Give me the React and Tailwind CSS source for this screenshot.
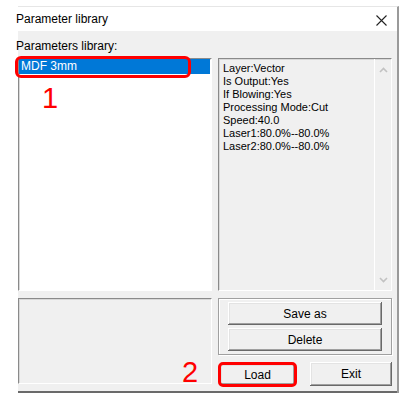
import React from "react";

const params = [
  "Layer:Vector",
  "Is Output:Yes",
  "If Blowing:Yes",
  "Processing Mode:Cut",
  "Speed:40.0",
  "Laser1:80.0%--80.0%",
  "Laser2:80.0%--80.0%",
];

const sunken =
  "border-t border-l border-[#8a8a8a] border-r border-b border-r-white border-b-white shadow-[inset_1px_1px_0_#d8d8d8]";

const btn =
  "flex items-center justify-center bg-[#f0f0f0] text-[12px] text-black shadow-[inset_-1px_-1px_0_#696969,inset_1px_1px_0_#ffffff,inset_-2px_-2px_0_#a0a0a0,inset_2px_2px_0_#e3e3e3]";

const ChevronUp = () => (
  <svg width="9" height="6" viewBox="0 0 9 6">
    <path d="M1 5 L4.5 1.5 L8 5" fill="none" stroke="#c2c2c2" strokeWidth="1.6" />
  </svg>
);

const ChevronDown = () => (
  <svg width="9" height="6" viewBox="0 0 9 6">
    <path d="M1 1 L4.5 4.5 L8 1" fill="none" stroke="#c2c2c2" strokeWidth="1.6" />
  </svg>
);

const App = () => {
  return (
    <div
      className="w-[410px] h-[405px] bg-white overflow-hidden"
      style={{ fontFamily: '"Liberation Sans", Arial, sans-serif' }}
    >
      <div className="ml-[18px] mt-[6px] w-[381px] h-[387px] flex flex-col border-t border-[#e6e6e6] border-r-2 border-r-[#9a9a9a]">
        {/* Title bar */}
        <div className="h-[24px] bg-white flex items-center justify-between shrink-0">
          <span className="-ml-[2px] text-[12px] text-black leading-[14px]">Parameter library</span>
          <svg className="mr-[10px] mt-[2px]" width="11" height="11" viewBox="0 0 11 11">
            <path d="M0.5 0.5 L10.5 10.5 M10.5 0.5 L0.5 10.5" stroke="#222" strokeWidth="1.1" />
          </svg>
        </div>

        {/* Body */}
        <div className="flex-1 bg-[#f0f0f0] border-b-2 border-[#6a6a6a] flex flex-col pr-[5px]">
          <div className="pt-[8px] h-[27px] -ml-[2px] text-[12px] leading-[14px] text-black">Parameters library:</div>

          <div className="flex gap-[6px] h-[233px]">
            {/* list box */}
            <div className={`relative w-[194px] bg-white ${sunken}`}>
              <div className="h-[15px] mr-[1px] bg-[#0078d7] text-white text-[12px] leading-[15px] pl-[2px]">
                MDF 3mm
              </div>
              <div className="mt-[10px] pl-[23px] text-[29px] leading-none text-[#ff0000]">1</div>
              <div className="absolute -left-[4px] -top-[3px] w-[176px] h-[22px] border-[3px] border-[#ff0000] rounded-[6px]" />
            </div>

            {/* parameter details */}
            <div className={`flex-1 flex bg-[#f0f0f0] ${sunken}`}>
              <div className="flex-1 pl-[4px] pt-[3px] text-[11px] leading-[13px] text-black">
                {params.map((p) => (
                  <div key={p}>{p}</div>
                ))}
              </div>
              <div className="w-[17px] border-l border-white flex flex-col items-center justify-between pt-[8px] pb-[7px]">
                <ChevronUp />
                <ChevronDown />
              </div>
            </div>
          </div>

          <div className="flex gap-[6px] mt-[7px]">
            <div className={`relative w-[194px] h-[86px] bg-[#f0f0f0] ${sunken}`}>
              <div className="absolute left-[163px] top-[59px] text-[29px] leading-none text-[#ff0000]">2</div>
            </div>

            <div className="flex-1 flex flex-col">
              <div className="h-[57px] border border-[#a0a0a0] shadow-[inset_1px_1px_0_#ffffff,1px_1px_0_#ffffff] flex flex-col gap-[3px] pt-[3px] px-[9px]">
                <div className={`h-[23px] ${btn}`}>Save as</div>
                <div className={`h-[23px] ${btn}`}>Delete</div>
              </div>
              <div className="flex justify-between mt-[7px]">
                <div className="relative w-[79px] h-[25px]">
                  <div className={`absolute inset-[2px] ${btn}`}>Load</div>
                  <div className="absolute inset-0 border-[3px] border-[#ff0000] rounded-[5px]" />
                </div>
                <div className={`w-[82px] h-[24px] ${btn}`}>Exit</div>
              </div>
            </div>
          </div>
        </div>
      </div>
    </div>
  );
};

export default App;
